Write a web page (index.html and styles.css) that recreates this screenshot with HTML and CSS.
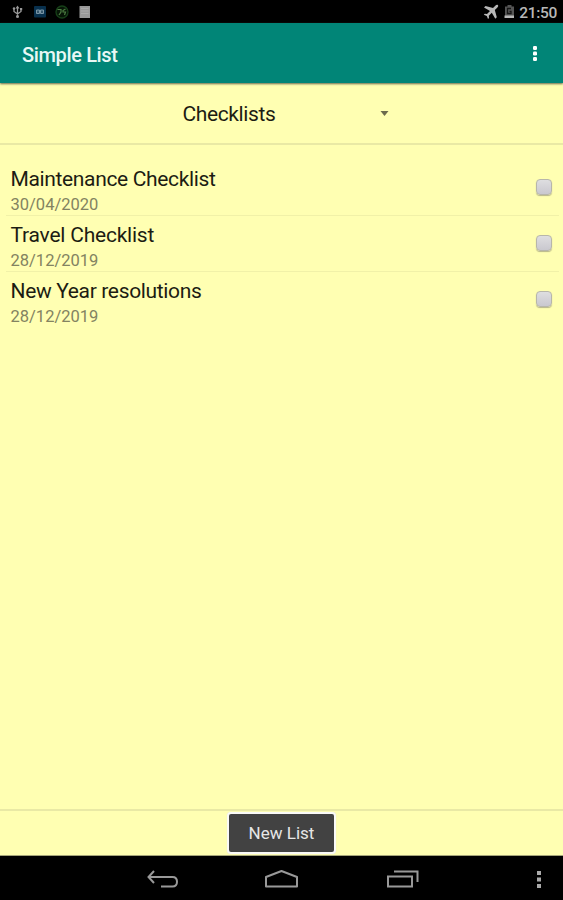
FILE: index.html
```html
<!DOCTYPE html>
<html lang="en">
<head>
<meta charset="utf-8">
<title>Simple List</title>
<link rel="stylesheet" href="styles.css">
</head>
<body>
<div class="status">
  <svg width="100" height="23" viewBox="0 0 100 23">
    <path d="M17.5 7v10M14 8.500v3l3.500 2.500 3.500-2.500V9" fill="none" stroke="#999" stroke-width="1.300"/>
    <path d="M15.500 8.500l2-3 2 3z" fill="#999"/><circle cx="17.500" cy="16.500" r="1.500" fill="#999"/><circle cx="14" cy="8.500" r="1.200" fill="#999"/><path d="M20 8h2.200v2.200H20z" fill="#999"/>
    <rect x="34" y="6" width="12" height="11.500" rx="1" fill="#08304d"/>
    <path d="M36.500 10h3v3.500h-3zM40.500 10h3v3.500h-3z" fill="#35566b" stroke="#7995a5"/>
    <circle cx="62" cy="12" r="6" fill="#071507" stroke="#164018" stroke-width="1.300"/>
    <path d="M57.500 9.500h3.500v2.500L59 15M65.500 9l-2.500 1.500v1.500h2.500l-1 3" fill="none" stroke="#4c7c42" stroke-width="1.200"/>
    <rect x="79.500" y="6" width="10.500" height="12" fill="#999"/>
    <path d="M81 8.500h7.500M81 11h7.500M81 13.500h7.500" stroke="#aaa"/>
  </svg>
  <div class="system">
    <svg width="32" height="23" viewBox="0 0 32 23">
      <path d="M15 5.200c-.8-.7-2-.2-2.700.5L10 8 2.500 6 1 7.500l6 3.500-3 3-2.200-.3L.8 14.700l3 1.200 1.200 3 1-1-.2-2.200 3-3 3.500 6 1.500-1.500L11.800 10l2.400-2.300c.8-.8 1.300-1.800.8-2.500z" fill="#b8b8b8"/>
      <path d="M24.500 5h4v1.500H31V18h-9V6.500h2.500z" fill="#555"/><path d="M21.500 15.500H31V18h-9.500z" fill="#b8b8b8"/>
      <path d="M28 8.500h-3.500v5H28v-2.200h-1.500" fill="none" stroke="#151515" stroke-width="1.300"/>
    </svg>
    <span class="clock">21:50</span>
  </div>
</div>
<header class="appbar">
  <h1>Simple List</h1>
  <svg width="8" height="18" viewBox="0 0 8 18" fill="#fff"><rect x="2" y="1" width="4" height="4" rx="1.200"/><rect x="2" y="6.500" width="4" height="4" rx="1.200"/><rect x="2" y="12" width="4" height="4" rx="1.200"/></svg>
</header>
<div class="spinner">
  <span class="category">Checklists</span>
  <svg width="9" height="5" viewBox="0 0 9 5"><path d="M.5 0h8L4.500 5z" fill="#6c6b4c"/></svg>
</div>
<main class="lists">
  <div class="row"><div><div class="name">Maintenance Checklist</div><div class="date">30/04/2020</div></div><span class="check"></span></div>
  <div class="row"><div><div class="name travel">Travel Checklist</div><div class="date">28/12/2019</div></div><span class="check"></span></div>
  <div class="row"><div><div class="name">New Year resolutions</div><div class="date">28/12/2019</div></div><span class="check"></span></div>
</main>
<footer class="actions"><button class="new-list">New List</button></footer>
<nav class="navbar">
  <svg width="563" height="44" viewBox="0 0 563 44" fill="none" stroke="#999" stroke-width="2">
    <path d="M154 15l-5.500 6 5.500 6M149 21h23.500q4.500 0 4.500 4.800t-4.500 4.800H161"/>
    <path d="M266 30.500V21l15.500-6L297 21v9.500z" stroke-linejoin="round"/>
    <path d="M388 20.500h24v10h-24zM394 15.500h23.500V26"/>
    <path d="M537 15h4v4h-4zM537 21.500h4v4h-4zM537 28h4v4h-4z" fill="#aaa" stroke="none"/>
  </svg>
</nav>
</body>
</html>
```

FILE: styles.css
```css
* { box-sizing: border-box; }
body { margin: 0; width: 563px; height: 900px; display: flex; flex-direction: column; overflow: hidden; background: #ffffb2; font-family: Roboto, sans-serif; color: #1c1c12; }
svg { display: block; flex: none; }
.status { height: 23px; flex: none; background: #000; display: flex; justify-content: space-between; }
.system { display: flex; gap: 4px; padding-right: 6px; }
.clock { color: #b8b8b8; font-size: 15.5px; font-weight: 500; line-height: 26px; letter-spacing: -.3px; }
.appbar { height: 60px; flex: none; background: #018577; display: flex; align-items: center; justify-content: space-between; padding: 2px 24px 0 22px; box-shadow: 0 1px 2px #66664d; z-index: 1; }
h1 { margin: 0; color: #e9f8f5; font-size: 20px; font-weight: 500; line-height: 28px; padding-top: 2px; letter-spacing: -.36px; }
.spinner { height: 62px; flex: none; display: flex; align-items: center; padding-left: 182.5px; border-bottom: 2px solid #e9e9a5; }
.category { width: 197px; font-size: 21px; line-height: 28px; padding-top: 2px; letter-spacing: -.38px; }
.lists { flex: 1; padding: 14.6px 4px 0 6px; }
.row { height: 56.3px; display: flex; justify-content: space-between; padding: 5.2px 7px 0 4.5px; border-bottom: 1px solid #f1f1a8; }
.row:last-child { border-bottom: 0; }
.name { font-size: 21px; line-height: 28px; letter-spacing: -.35px; }
.travel { letter-spacing: -.22px; }
.date { font-size: 16.5px; line-height: 22px; padding-top: .8px; color: #838361; }
.check { width: 16px; height: 16px; margin-top: 14px; border: 1px solid #b7b6ab; border-radius: 4px; background: linear-gradient(#dedee0, #c9c8cf); box-shadow: 0 1px 1px #b8b78b; }
.actions { height: 47px; flex: none; border-top: 2px solid #e9e9a5; border-bottom: 1px solid #a5a579; display: flex; justify-content: center; align-items: flex-start; padding-top: 1px; }
.new-list { width: 109px; height: 42px; border: 2px solid #fafaf7; border-radius: 4px; background: #424242; color: #e6e6e6; font: 17px Roboto, sans-serif; padding: 0; box-shadow: 0 0 1px #ddd; }
.navbar { height: 44px; flex: none; background: #000; }
```
